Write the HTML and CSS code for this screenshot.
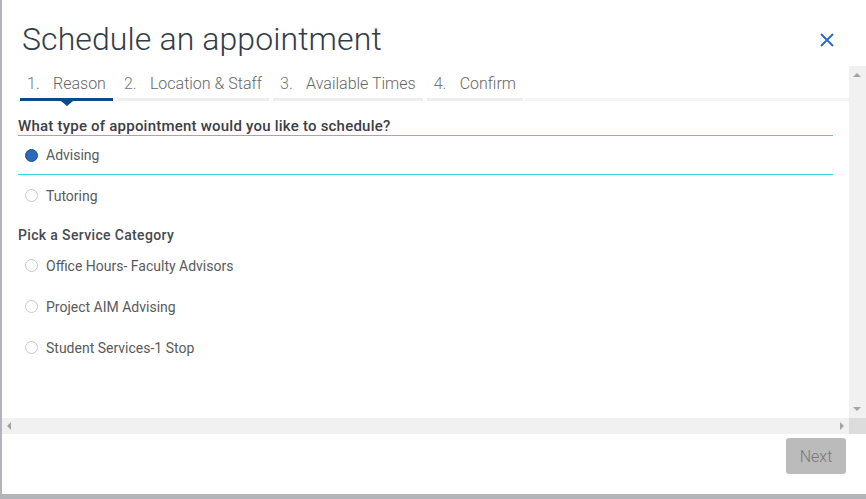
FILE: index.html
```html
<!DOCTYPE html>
<html lang="en">
<head>
<meta charset="utf-8">
<title>Schedule an appointment</title>
<link rel="stylesheet" href="styles.css">
</head>
<body>
<div class="modal">
  <header class="modal-header">
    <h1 class="title">Schedule an appointment</h1>
    <button class="close" aria-label="Close">
      <svg width="14" height="14" viewBox="0 0 14 14"><path d="M1 1 L13 13 M13 1 L1 13" stroke="#2b6fc0" stroke-width="2" fill="none"/></svg>
    </button>
  </header>
  <div class="scroll-frame">
    <div class="scroll-content">
      <nav class="steps">
        <div class="step active"><span class="num">1.</span><span class="label">Reason</span></div>
        <div class="step"><span class="num">2.</span><span class="label">Location &amp; Staff</span></div>
        <div class="step"><span class="num">3.</span><span class="label">Available Times</span></div>
        <div class="step"><span class="num">4.</span><span class="label">Confirm</span></div>
        <div class="step-rest"></div>
      </nav>
      <div class="form">
        <div class="question">What type of appointment would you like to schedule?</div>
        <div class="option selected"><span class="radio checked"></span><span class="opt-label">Advising</span></div>
        <div class="option"><span class="radio"></span><span class="opt-label">Tutoring</span></div>
        <div class="subheading">Pick a Service Category</div>
        <div class="option"><span class="radio"></span><span class="opt-label">Office Hours- Faculty Advisors</span></div>
        <div class="option"><span class="radio"></span><span class="opt-label">Project AIM Advising</span></div>
        <div class="option"><span class="radio"></span><span class="opt-label">Student Services-1 Stop</span></div>
      </div>
    </div>
    <div class="vscroll">
      <span class="arrow up"></span>
      <span class="arrow down"></span>
    </div>
    <div class="hscroll">
      <span class="arrow left"></span>
      <span class="arrow right"></span>
    </div>
    <div class="corner"></div>
  </div>
  <footer class="modal-footer">
    <button class="next">Next</button>
  </footer>
</div>
</body>
</html>
```
FILE: styles.css
```css
html, body {
  margin: 0;
  padding: 0;
}
body {
  background: #b1b5b9;
  font-family: Roboto, "Liberation Sans", sans-serif;
  width: 866px;
  height: 499px;
  overflow: hidden;
}
.modal {
  margin-left: 2px;
  width: 864px;
  height: 494px;
  background: #fff;
  display: flex;
  flex-direction: column;
}
.modal-header {
  height: 66px;
  display: flex;
  align-items: flex-start;
  justify-content: space-between;
  box-sizing: border-box;
  padding: 23px 0 0 20px;
}
.title {
  margin: 0;
  font-size: 32px;
  line-height: 32px;
  font-weight: 300;
  color: #323c46;
  letter-spacing: 0.1px;
}
.close {
  border: 0;
  background: none;
  padding: 0;
  margin: 10px 32px 0 0;
  width: 14px;
  height: 14px;
  display: block;
}
.close svg { display: block; }

.scroll-frame {
  display: grid;
  grid-template-columns: 847px 17px;
  grid-template-rows: 352px 16px;
}
.scroll-content {
  overflow: hidden;
}
.steps {
  display: flex;
  gap: 4px;
  padding: 8px 0 0 18px;
}
.step {
  position: relative;
  display: flex;
  padding: 0 7px 4px 7px;
  border-bottom: 3px solid #eeeeee;
  font-size: 16px;
  line-height: 20px;
  font-weight: 300;
  color: #666;
}
.step .num {
  width: 26px;
  color: #777;
}
.step.active {
  border-bottom-color: #0b4a8b;
}
.step.active::after {
  content: "";
  position: absolute;
  left: 41px;
  bottom: -8px;
  border-left: 6px solid transparent;
  border-right: 6px solid transparent;
  border-top: 5px solid #0b4a8b;
}
.step-rest {
  flex: 1;
  margin-left: -2px;
  border-bottom: 3px solid #f4f4f4;
  align-self: flex-end;
}
.form {
  padding: 16px 16px 0 16px;
}
.question {
  font-size: 15px;
  line-height: 18px;
  font-weight: 500;
  color: #3a4046;
  letter-spacing: 0.22px;
  border-bottom: 1px solid #3dd3da;
}
.option {
  display: flex;
  align-items: center;
  height: 41px;
  padding-left: 7px;
  font-size: 14px;
  color: #5a5a5a;
}
.option.selected {
  height: 38px;
  border-bottom: 1px solid #3dd3da;
}
.radio {
  width: 13px;
  height: 13px;
  box-sizing: border-box;
  border-radius: 50%;
  border: 1px solid #c8c8c8;
  background: #fff;
  margin-right: 8px;
}
.radio.checked {
  background: #2a6ab8;
  border-color: #1c4f8c;
}
.subheading {
  margin-top: 9px;
  font-size: 14px;
  line-height: 20px;
  font-weight: 500;
  color: #454a50;
  letter-spacing: 0.35px;
}

.vscroll, .hscroll {
  position: relative;
  background: #f1f1f1;
}
.corner { background: #dcdcdc; }
.arrow {
  position: absolute;
  width: 0;
  height: 0;
}
.arrow.up {
  left: 4px;
  top: 7px;
  border-left: 4px solid transparent;
  border-right: 4px solid transparent;
  border-bottom: 4px solid #a3a3a3;
}
.arrow.down {
  left: 4px;
  bottom: 7px;
  border-left: 4px solid transparent;
  border-right: 4px solid transparent;
  border-top: 4px solid #a3a3a3;
}
.arrow.left {
  left: 5px;
  top: 4px;
  border-top: 4px solid transparent;
  border-bottom: 4px solid transparent;
  border-right: 4px solid #a3a3a3;
}
.arrow.right {
  right: 5px;
  top: 4px;
  border-top: 4px solid transparent;
  border-bottom: 4px solid transparent;
  border-left: 4px solid #a3a3a3;
}

.modal-footer {
  flex: 1;
  display: flex;
  justify-content: flex-end;
  align-items: flex-start;
  padding: 4px 20px 0 0;
}
.next {
  width: 60px;
  height: 36px;
  border: 0;
  border-radius: 3px;
  background: #bbbbbb;
  color: #777;
  font-family: Roboto, "Liberation Sans", sans-serif;
  font-size: 16px;
  font-weight: 300;
  padding: 0;
}
```
